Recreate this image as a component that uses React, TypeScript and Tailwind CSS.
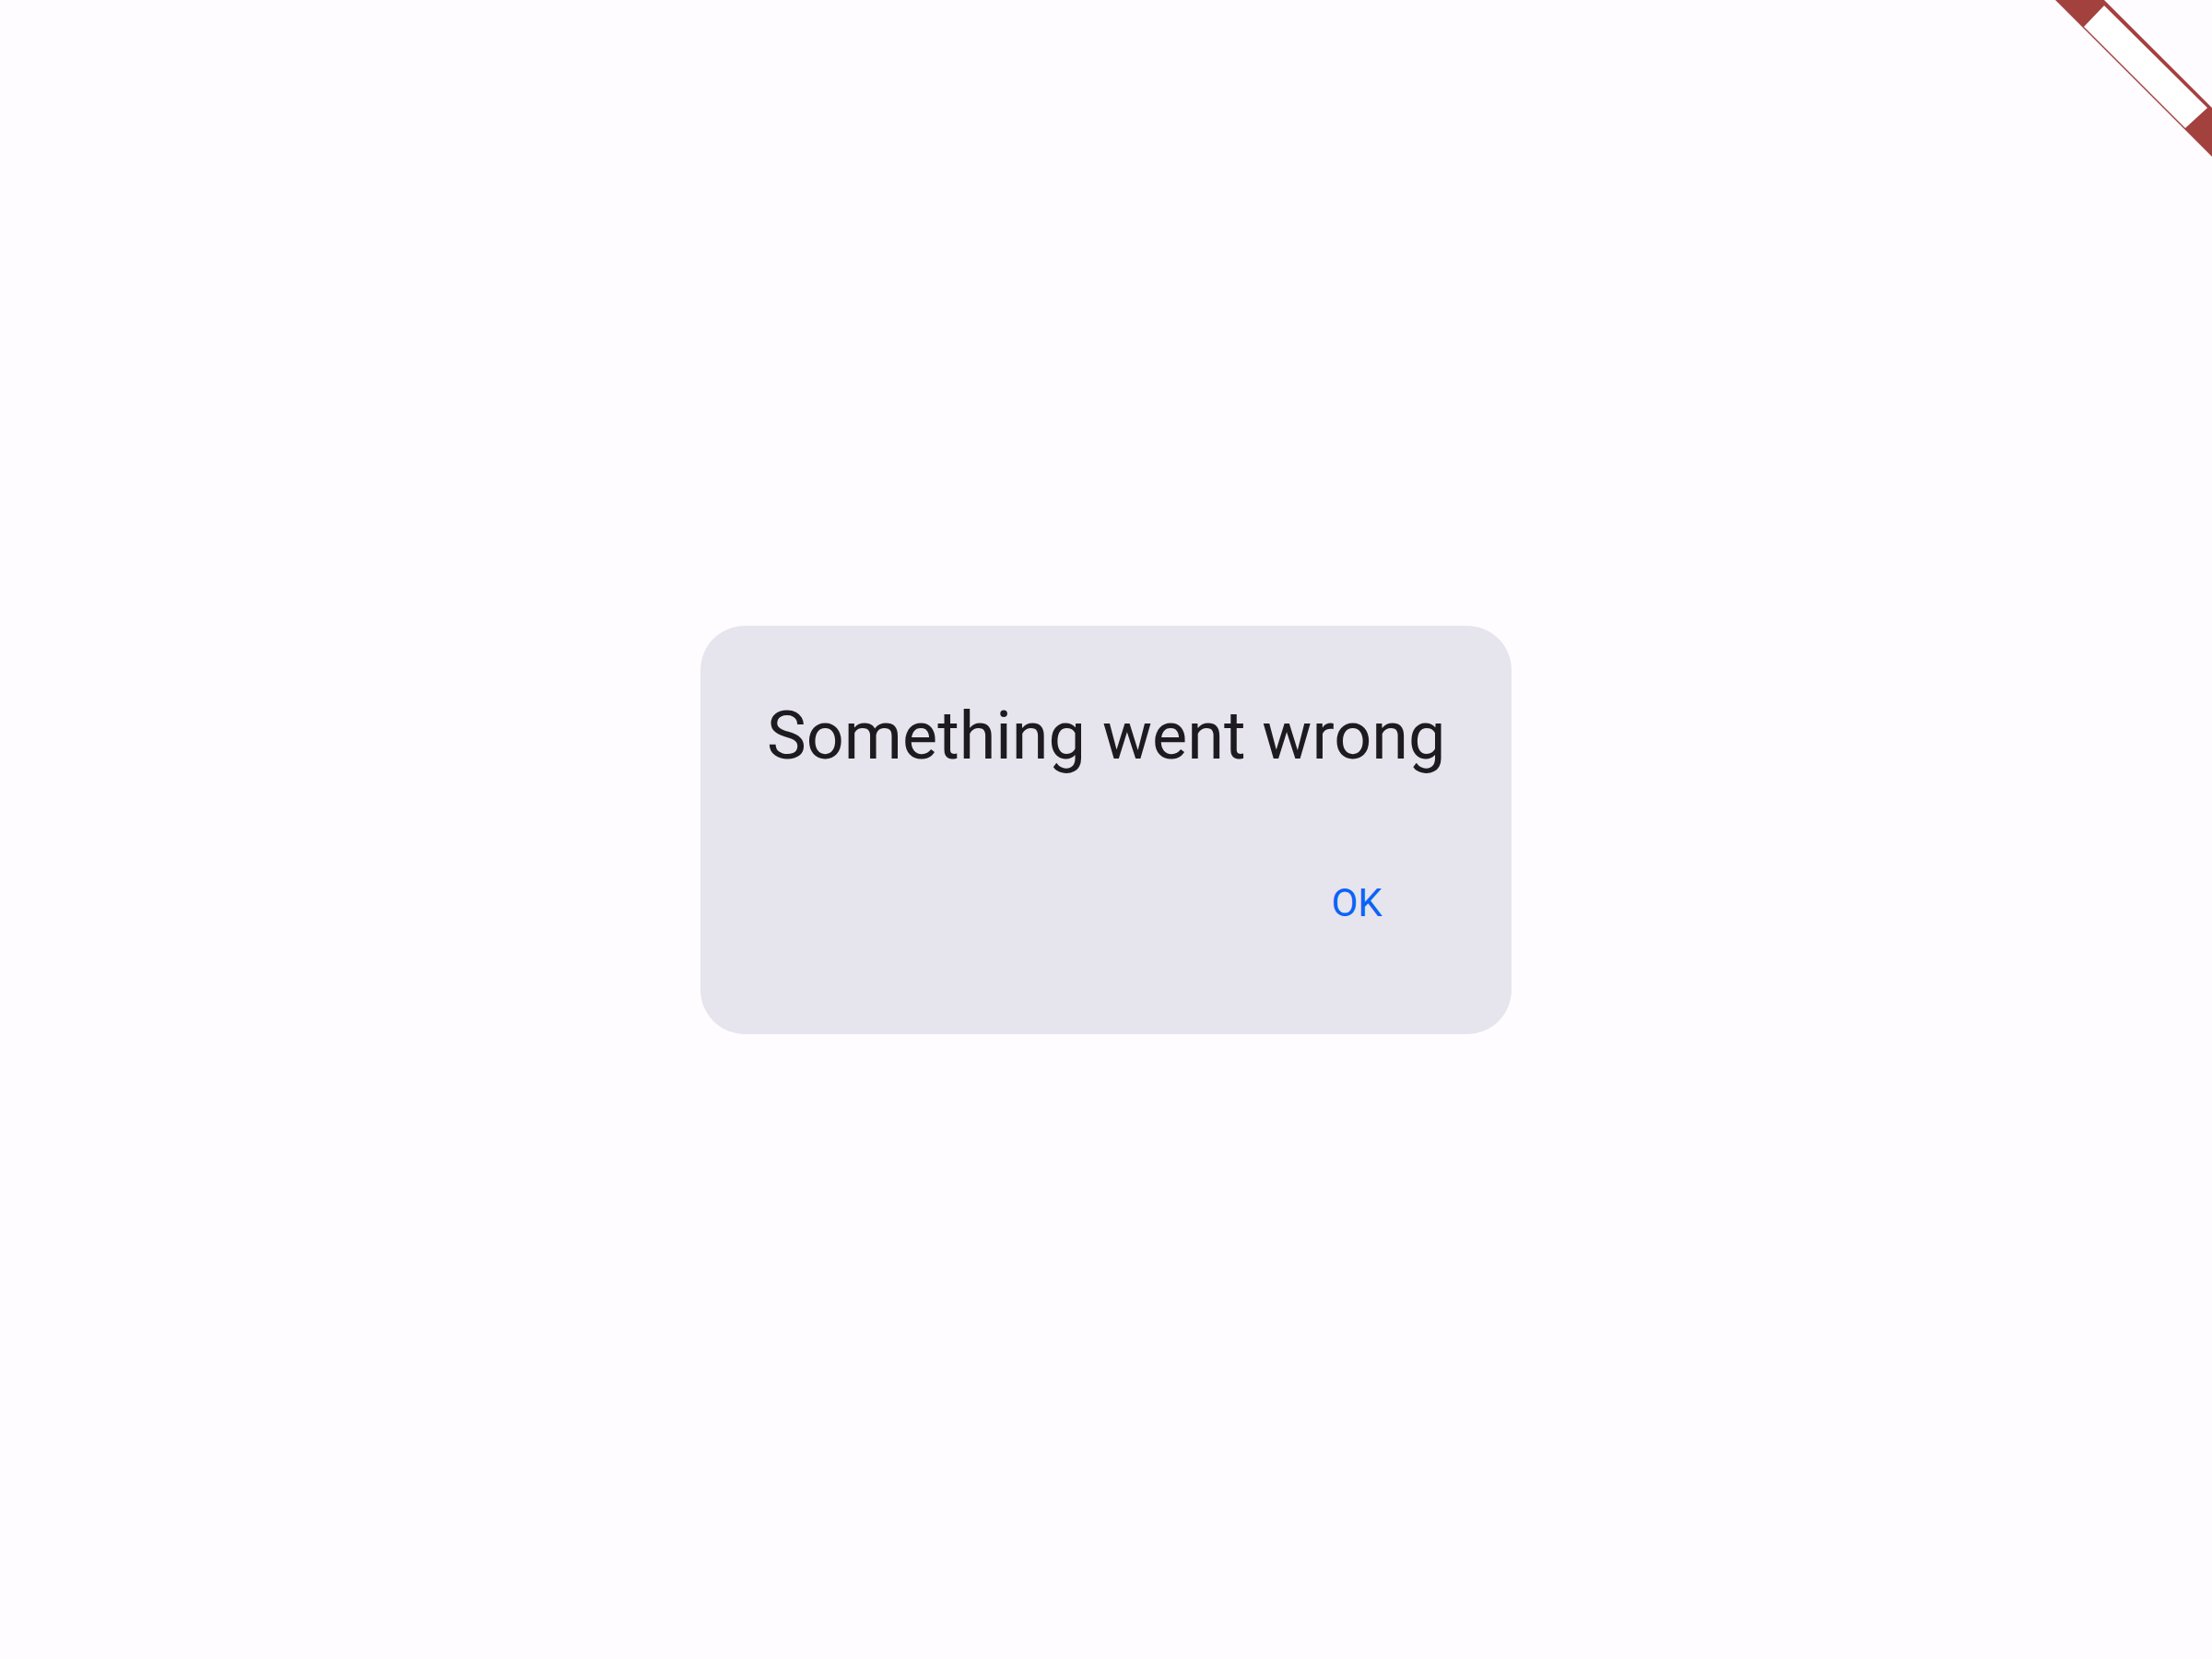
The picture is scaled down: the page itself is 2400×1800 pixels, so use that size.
import React from 'react';

const DebugBanner = () => (
  <svg className="absolute top-0 right-0" width="170" height="170" viewBox="0 0 170 170">
    <polygon points="0,0 53,0 170,117 170,170" fill="#a3413f" />
    <polygon points="31,29 53,6 165,117 141,139" fill="#ffffff" />
  </svg>
);

export default function App() {
  return (
    <div
      className="relative w-full h-[1800px] bg-[#fffcff] flex items-center justify-center overflow-hidden"
      style={{ fontFamily: 'Roboto, "Liberation Sans", sans-serif' }}
    >
      <DebugBanner />

      <div className="w-[880px] h-[443px] rounded-[48px] bg-[#e6e4ed] flex flex-col px-[72px] pt-[72px]">
        <h2 className="text-[72px] leading-[96px] font-normal text-[#1d1b20] whitespace-nowrap">
          Something went wrong
        </h2>

        <div className="flex justify-end mt-[73px]">
          <button className="min-w-[192px] h-[120px] px-[36px] rounded-full text-[42px] leading-[60px] font-normal text-[#0b63f6] flex items-center justify-center">
            OK
          </button>
        </div>
      </div>
    </div>
  );
}
